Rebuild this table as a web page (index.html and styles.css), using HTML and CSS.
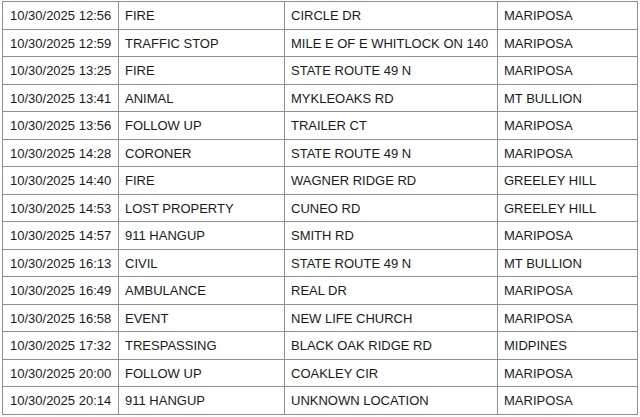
FILE: index.html
```html
<!DOCTYPE html>
<html>
<head>
<meta charset="utf-8">
<link rel="stylesheet" href="styles.css">
</head>
<body>
<table class="log">
<colgroup>
<col class="c-time"><col class="c-type"><col class="c-loc"><col class="c-city">
</colgroup>
<tbody>
<tr><td>10/30/2025 12:56</td><td>FIRE</td><td>CIRCLE DR</td><td>MARIPOSA</td></tr>
<tr><td>10/30/2025 12:59</td><td>TRAFFIC STOP</td><td>MILE E OF E WHITLOCK ON 140</td><td>MARIPOSA</td></tr>
<tr><td>10/30/2025 13:25</td><td>FIRE</td><td>STATE ROUTE 49 N</td><td>MARIPOSA</td></tr>
<tr><td>10/30/2025 13:41</td><td>ANIMAL</td><td>MYKLEOAKS RD</td><td>MT BULLION</td></tr>
<tr><td>10/30/2025 13:56</td><td>FOLLOW UP</td><td>TRAILER CT</td><td>MARIPOSA</td></tr>
<tr><td>10/30/2025 14:28</td><td>CORONER</td><td>STATE ROUTE 49 N</td><td>MARIPOSA</td></tr>
<tr><td>10/30/2025 14:40</td><td>FIRE</td><td>WAGNER RIDGE RD</td><td>GREELEY HILL</td></tr>
<tr><td>10/30/2025 14:53</td><td>LOST PROPERTY</td><td>CUNEO RD</td><td>GREELEY HILL</td></tr>
<tr><td>10/30/2025 14:57</td><td>911 HANGUP</td><td>SMITH RD</td><td>MARIPOSA</td></tr>
<tr><td>10/30/2025 16:13</td><td>CIVIL</td><td>STATE ROUTE 49 N</td><td>MT BULLION</td></tr>
<tr><td>10/30/2025 16:49</td><td>AMBULANCE</td><td>REAL DR</td><td>MARIPOSA</td></tr>
<tr><td>10/30/2025 16:58</td><td>EVENT</td><td>NEW LIFE CHURCH</td><td>MARIPOSA</td></tr>
<tr><td>10/30/2025 17:32</td><td>TRESPASSING</td><td>BLACK OAK RIDGE RD</td><td>MIDPINES</td></tr>
<tr><td>10/30/2025 20:00</td><td>FOLLOW UP</td><td>COAKLEY CIR</td><td>MARIPOSA</td></tr>
<tr><td>10/30/2025 20:14</td><td>911 HANGUP</td><td>UNKNOWN LOCATION</td><td>MARIPOSA</td></tr>
</tbody>
</table>
</body>
</html>
```
FILE: styles.css
```css
html, body {
  margin: 0;
  padding: 0;
  background: #ffffff;
}
body {
  padding: 1px 0 0 2px;
}
.log {
  border-collapse: collapse;
  table-layout: fixed;
  width: 635px;
  font-family: "Liberation Sans", Arial, sans-serif;
  font-size: 13px;
  color: #1a1a1a;
}
.c-time { width: 116px; }
.c-type { width: 166px; }
.c-loc { width: 213px; }
.c-city { width: 140px; }
.log td {
  border: 1px solid #8f8f8f;
  height: 27.5px;
  padding: 1px 0 0 7px;
  box-sizing: border-box;
  white-space: nowrap;
  overflow: hidden;
  vertical-align: middle;
  line-height: 15px;
}
.log td + td {
  padding-left: 6px;
}
```
